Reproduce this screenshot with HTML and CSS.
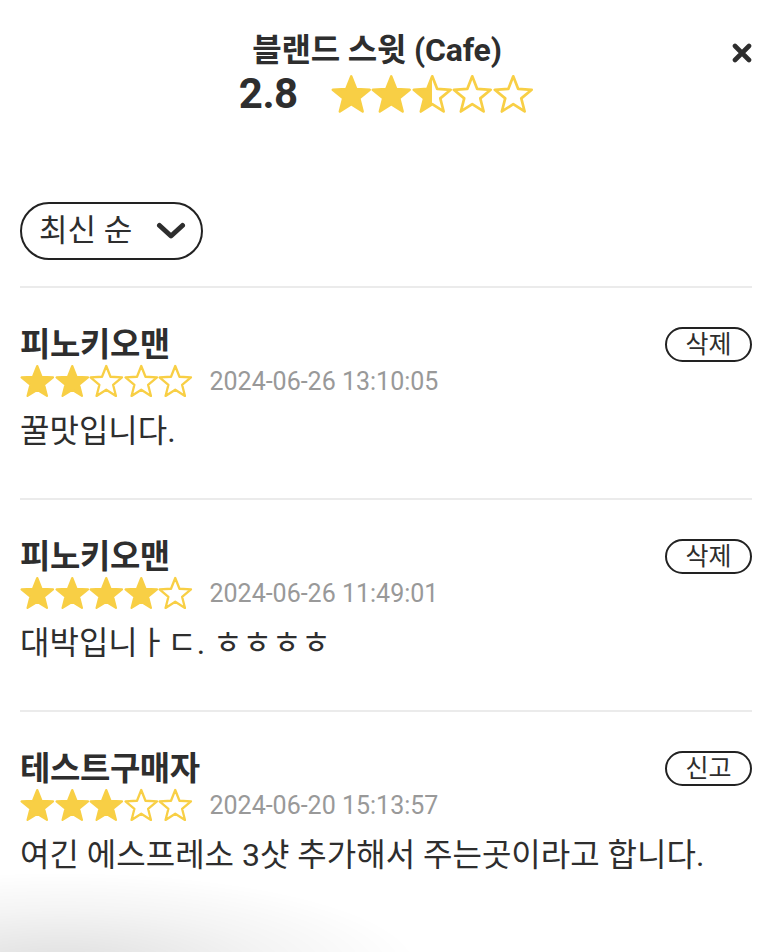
FILE: index.html
```html
<!DOCTYPE html>
<html lang="ko">
<head>
<meta charset="utf-8">
<title>블랜드 스윗 (Cafe) 리뷰</title>
<link rel="stylesheet" href="styles.css">
</head>
<body>
<svg class="defs" width="0" height="0" aria-hidden="true">
  <defs>
    <path id="star" d="M12 1.4 L14.94 8.86 L22.94 9.35 L16.76 14.45 L18.76 22.2 L12 17.9 L5.24 22.2 L7.24 14.45 L1.06 9.35 L9.06 8.86 Z"/>
    <linearGradient id="halfFill" x1="0" x2="1" y1="0" y2="0">
      <stop offset="50%" stop-color="#F8CF45"/>
      <stop offset="50%" stop-color="#ffffff"/>
    </linearGradient>
  </defs>
</svg>

<div class="sheet">
  <header class="head">
    <h1 class="title">블랜드 스윗 (Cafe)</h1>
    <div class="rating">
      <span class="score">2.8</span>
      <span class="stars big">
        <svg viewBox="0 0 24 24"><use href="#star" class="on"/></svg>
        <svg viewBox="0 0 24 24"><use href="#star" class="on"/></svg>
        <svg viewBox="0 0 24 24"><use href="#star" class="half"/></svg>
        <svg viewBox="0 0 24 24"><use href="#star" class="off"/></svg>
        <svg viewBox="0 0 24 24"><use href="#star" class="off"/></svg>
      </span>
    </div>
    <button class="close" aria-label="닫기">
      <svg viewBox="0 0 20 20"><path d="M3 3 L17 17 M17 3 L3 17"/></svg>
    </button>
  </header>

  <div class="toolbar">
    <button class="sort">
      <span>최신 순</span>
      <svg class="chev" viewBox="0 0 30 18"><path d="M3.5 3.5 L15 14 L26.5 3.5"/></svg>
    </button>
  </div>

  <section class="list">
    <article class="review">
      <div class="review-top">
        <h2 class="name">피노키오맨</h2>
        <button class="pill">삭제</button>
      </div>
      <div class="meta">
        <span class="stars small">
          <svg viewBox="0 0 24 24"><use href="#star" class="on"/></svg>
          <svg viewBox="0 0 24 24"><use href="#star" class="on"/></svg>
          <svg viewBox="0 0 24 24"><use href="#star" class="off"/></svg>
          <svg viewBox="0 0 24 24"><use href="#star" class="off"/></svg>
          <svg viewBox="0 0 24 24"><use href="#star" class="off"/></svg>
        </span>
        <span class="date">2024-06-26 13:10:05</span>
      </div>
      <p class="text">꿀맛입니다.</p>
    </article>

    <article class="review">
      <div class="review-top">
        <h2 class="name">피노키오맨</h2>
        <button class="pill">삭제</button>
      </div>
      <div class="meta">
        <span class="stars small">
          <svg viewBox="0 0 24 24"><use href="#star" class="on"/></svg>
          <svg viewBox="0 0 24 24"><use href="#star" class="on"/></svg>
          <svg viewBox="0 0 24 24"><use href="#star" class="on"/></svg>
          <svg viewBox="0 0 24 24"><use href="#star" class="on"/></svg>
          <svg viewBox="0 0 24 24"><use href="#star" class="off"/></svg>
        </span>
        <span class="date">2024-06-26 11:49:01</span>
      </div>
      <p class="text">대박입니ㅏㄷ. ㅎㅎㅎㅎ</p>
    </article>

    <article class="review">
      <div class="review-top">
        <h2 class="name">테스트구매자</h2>
        <button class="pill">신고</button>
      </div>
      <div class="meta">
        <span class="stars small">
          <svg viewBox="0 0 24 24"><use href="#star" class="on"/></svg>
          <svg viewBox="0 0 24 24"><use href="#star" class="on"/></svg>
          <svg viewBox="0 0 24 24"><use href="#star" class="on"/></svg>
          <svg viewBox="0 0 24 24"><use href="#star" class="off"/></svg>
          <svg viewBox="0 0 24 24"><use href="#star" class="off"/></svg>
        </span>
        <span class="date">2024-06-20 15:13:57</span>
      </div>
      <p class="text">여긴 에스프레소 3샷 추가해서 주는곳이라고 합니다.</p>
    </article>
  </section>
</div>
<div class="shade" aria-hidden="true"></div>
</body>
</html>
```

FILE: styles.css
```css
* { box-sizing: border-box; }

html, body {
  margin: 0;
  padding: 0;
  background: #ffffff;
}

body {
  font-family: Roboto, "Noto Sans CJK KR", "Noto Sans", sans-serif;
  color: #2e2e2e;
  overflow: hidden;
  height: 952px;
}

.defs { position: absolute; width: 0; height: 0; }

.sheet {
  padding: 32px 16px 0 20px;
}

.head {
  position: relative;
  display: flex;
  flex-direction: column;
  align-items: center;
}

.title {
  margin: 0;
  font-size: 32px;
  line-height: 36px;
  font-weight: 700;
  color: #2e2e2e;
  letter-spacing: -0.2px;
  padding-right: 18px;
}

.rating {
  margin-top: 6px;
  display: flex;
  align-items: center;
  gap: 33px;
  height: 40px;
}

.score {
  font-size: 42px;
  font-weight: 700;
  line-height: 40px;
  color: #2e2e2e;
  letter-spacing: -0.5px;
}

.stars { display: flex; }
.stars svg { display: block; overflow: visible; }
.stars.big svg { width: 40.5px; height: 40.5px; }
.stars.small svg { width: 34.5px; height: 34.5px; }

.on { fill: #F8CF45; stroke: #F8CF45; stroke-width: 1.5; stroke-linejoin: round; }
.off { fill: #ffffff; stroke: #F8CF45; stroke-width: 1.6; stroke-linejoin: round; }
.half { fill: url(#halfFill); stroke: #F8CF45; stroke-width: 1.6; stroke-linejoin: round; }

.close {
  position: absolute;
  top: 11px;
  right: 0;
  width: 20px;
  height: 20px;
  padding: 0;
  border: 0;
  background: none;
}
.close svg { display: block; width: 20px; height: 20px; }
.close path { stroke: #2e2e2e; stroke-width: 4.6; stroke-linecap: round; fill: none; }

.toolbar {
  margin-top: 88px;
  display: flex;
}

.sort {
  display: flex;
  align-items: center;
  justify-content: space-between;
  width: 183px;
  height: 58px;
  padding: 0 15px 0 17px;
  border: 2px solid #222222;
  border-radius: 29px;
  background: #ffffff;
  font-family: inherit;
  font-size: 31px;
  color: #2e2e2e;
}
.sort span { line-height: 1; margin-top: -2px; }
.chev { width: 30px; height: 18px; display: block; }
.chev path { fill: none; stroke: #2e2e2e; stroke-width: 5; stroke-linecap: round; stroke-linejoin: round; }

.list {
  margin-top: 26px;
}

.review {
  border-top: 2px solid #ebebeb;
  padding: 39px 0 49px;
}

.review-top {
  display: flex;
  align-items: center;
  justify-content: space-between;
  height: 35px;
}

.name {
  margin: 0;
  font-size: 33px;
  line-height: 35px;
  font-weight: 700;
  color: #2e2e2e;
  letter-spacing: -0.4px;
}

.pill {
  width: 87px;
  height: 35px;
  padding: 0;
  border: 2px solid #222222;
  border-radius: 18px;
  background: #ffffff;
  font-family: inherit;
  font-size: 25px;
  line-height: 1;
  color: #2e2e2e;
}

.meta {
  margin-top: 2px;
  display: flex;
  align-items: center;
  gap: 17px;
  height: 35px;
}

.date {
  font-size: 25px;
  color: #999999;
}

.text {
  margin: 14px 0 0;
  font-size: 32px;
  line-height: 36px;
  color: #2e2e2e;
}

.shade {
  position: fixed;
  left: 0;
  bottom: 0;
  width: 440px;
  height: 110px;
  pointer-events: none;
  background: radial-gradient(ellipse 360px 95px at 60px 125px, rgba(0,0,0,0.13), rgba(0,0,0,0.045) 60%, rgba(0,0,0,0) 100%);
}
```
